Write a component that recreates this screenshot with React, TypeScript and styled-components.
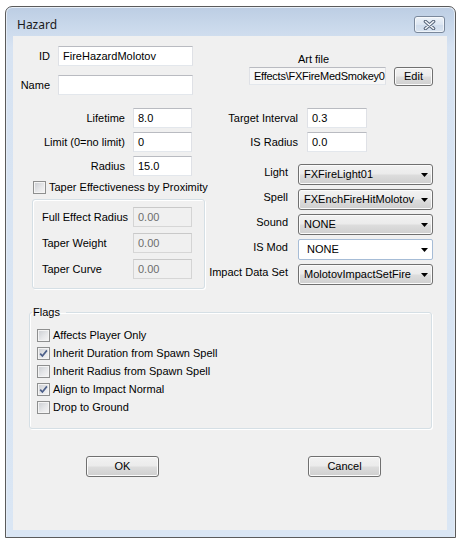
import React from "react";
import styled, { createGlobalStyle } from "styled-components";

const Global = createGlobalStyle`
  html, body { margin: 0; padding: 0; background: #ffffff; }
  body { font-family: "Liberation Sans", Arial, sans-serif; font-size: 11px; color: #000000; }
  * { box-sizing: border-box; }
`;

const Window = styled.div`
  margin: 6px 0 0 5px;
  width: 451px;
  height: 532px;
  border: 1px solid #5b5b5b;
  border-radius: 7px 7px 0 0;
  background: linear-gradient(to bottom, #bccde3 0px, #cbdaec 22px, #d7e3f2 40px, #dae6f4 100%);
  box-shadow: inset 0 1px 0 #e9f0f8, inset 1px 0 0 #e4ecf6, inset -1px 0 0 #e4ecf6;
  display: flex;
  flex-direction: column;
  padding: 0 8px 7px 7px;
`;

const TitleBar = styled.div`
  height: 29px;
  flex: none;
  display: flex;
  align-items: flex-start;
  justify-content: space-between;
  padding: 9px 2px 0 4px;
`;

const Title = styled.span`
  font-family: "Noto Sans", "Open Sans", sans-serif;
  font-size: 12px;
  line-height: 17px;
  color: #1b1b1b;
`;

const CloseButton = styled.div`
  width: 31px;
  height: 17px;
  border: 1px solid #7a889b;
  border-radius: 3px;
  background: linear-gradient(to bottom, #eef3f9 0%, #dce6f2 50%, #cfdcec 51%, #d9e4f1 100%);
  box-shadow: inset 0 0 0 1px rgba(255, 255, 255, 0.6);
  display: flex;
  align-items: center;
  justify-content: center;
`;

const Client = styled.div`
  flex: 1;
  background: #f0f0f0;
  display: flex;
  flex-direction: column;
  padding-top: 10px;
`;

const RowA = styled.div`
  display: flex;
  align-items: flex-start;
`;

const IdGrid = styled.div`
  display: grid;
  grid-template-columns: 37px 135px;
  column-gap: 8px;
  row-gap: 9px;
  align-items: center;
`;

const ArtBlock = styled.div`
  margin: 6px 0 0 56px;
  display: grid;
  grid-template-columns: 137px 39px;
  column-gap: 8px;
  row-gap: 1px;
  align-items: start;
`;

const ArtLabel = styled.div`
  grid-column: 1;
  text-align: center;
  padding-right: 8px;
  line-height: 14px;
`;

const RowB = styled.div`
  margin-top: 13px;
  display: flex;
  align-items: flex-start;
`;

const LeftCol = styled.div`
  width: 196px;
  flex: none;
  display: flex;
  flex-direction: column;
`;

const RightCol = styled.div`
  flex: 1;
  display: flex;
  flex-direction: column;
`;

const Stack = styled.div<{ $gap: number; $top?: number }>`
  display: flex;
  flex-direction: column;
  gap: ${(p) => p.$gap}px;
  margin-top: ${(p) => p.$top ?? 0}px;
`;

const FieldRow = styled.div<{ $gap: number }>`
  display: flex;
  align-items: center;
  gap: ${(p) => p.$gap}px;
`;

const Label = styled.span<{ $w?: number; $align?: "left" | "right"; $lift?: number }>`
  width: ${(p) => (p.$w ? `${p.$w}px` : "auto")};
  flex: none;
  text-align: ${(p) => p.$align ?? "right"};
  white-space: nowrap;
  line-height: 13px;
  padding-bottom: ${(p) => p.$lift ?? 0}px;
`;

type BoxState = "normal" | "disabled" | "readonly";

const TextBox = styled.div<{ $w: number; $h?: number; $state?: BoxState; $tight?: boolean }>`
  width: ${(p) => p.$w}px;
  height: ${(p) => p.$h ?? 20}px;
  flex: none;
  display: flex;
  align-items: center;
  padding-left: 4px;
  border: 1px solid;
  border-color: ${(p) =>
    p.$state === "disabled"
      ? "#c9c9c9 #d4d4d4 #d6d6d6 #d4d4d4"
      : "#b9bbc1 #dfe1e6 #e3e7ec #dfe1e6"};
  background: ${(p) =>
    p.$state === "disabled" ? "#f0f0f0" : p.$state === "readonly" ? "#f7f7f7" : "#ffffff"};
  color: ${(p) => (p.$state === "disabled" ? "#6d6d6d" : "#000000")};
  white-space: nowrap;
  overflow: hidden;
  line-height: 13px;
  letter-spacing: ${(p) => (p.$tight ? "-0.25px" : "normal")};
`;

const PushButton = styled.div<{ $w: number; $h?: number }>`
  width: ${(p) => p.$w}px;
  height: ${(p) => p.$h ?? 21}px;
  flex: none;
  border: 1px solid #707070;
  border-radius: 3px;
  background: linear-gradient(to bottom, #f2f2f2 0%, #ebebeb 48%, #dddddd 52%, #cfcfcf 100%);
  box-shadow: inset 0 0 0 1px #fbfbfb;
  display: flex;
  align-items: center;
  justify-content: center;
  line-height: 13px;
`;

const Combo = styled.div<{ $editable?: boolean }>`
  width: 135px;
  height: 21px;
  flex: none;
  display: flex;
  align-items: center;
  justify-content: space-between;
  padding: 0 4px 0 ${(p) => (p.$editable ? 8 : 5)}px;
  border: 1px solid ${(p) => (p.$editable ? "#a6bcd6" : "#707070")};
  border-radius: ${(p) => (p.$editable ? 2 : 3)}px;
  background: ${(p) =>
    p.$editable
      ? "#ffffff"
      : "linear-gradient(to bottom, #f2f2f2 0%, #ebebeb 48%, #dddddd 52%, #cfcfcf 100%)"};
  box-shadow: ${(p) => (p.$editable ? "none" : "inset 0 0 0 1px #fbfbfb")};
  white-space: nowrap;
  line-height: 13px;
`;

const CheckRow = styled.div<{ $left?: number; $top?: number }>`
  display: flex;
  align-items: center;
  height: 13px;
  margin-left: ${(p) => p.$left ?? 0}px;
  margin-top: ${(p) => p.$top ?? 0}px;
  gap: 3px;
  white-space: nowrap;
  line-height: 13px;
`;

const CheckBoxFrame = styled.span`
  width: 13px;
  height: 13px;
  flex: none;
  border: 1px solid #8e8f8f;
  background: linear-gradient(135deg, #c9ccd1 0%, #e6e7e9 55%, #f6f6f6 100%);
  box-shadow: inset 0 0 0 1px #f4f4f4;
  display: flex;
  align-items: center;
  justify-content: center;
`;

const GroupBox = styled.div`
  margin: 5px 0 0 19px;
  width: 173px;
  height: 90px;
  border: 1px solid #d5dfe5;
  border-radius: 3px;
  box-shadow: inset 1px 1px 0 #ffffff, 1px 1px 0 #ffffff;
  padding: 7px 0 0 9px;
  display: flex;
  flex-direction: column;
  gap: 6px;
`;

const FlagsSet = styled.fieldset`
  margin: 17px 0 0 16px;
  width: 403px;
  min-width: 0;
  border: 1px solid #d5dfe5;
  border-radius: 3px;
  box-shadow: inset 1px 1px 0 #ffffff, 1px 1px 0 #ffffff;
  padding: 10px 0 14px 2px;
`;

const Legend = styled.legend`
  padding: 0 6px 0 1px;
  line-height: 13px;
  font-size: 11px;
`;

const FlagList = styled.div`
  display: flex;
  flex-direction: column;
  gap: 5px;
  padding-left: 5px;
`;

const ButtonRow = styled.div`
  margin-top: 27px;
  display: flex;
  padding-left: 73px;
  gap: 149px;
`;

const Arrow = () => (
  <svg width="7" height="4" viewBox="0 0 7 4">
    <polygon points="0,0 7,0 3.5,4" fill="#000000" />
  </svg>
);

const CheckMark = () => (
  <svg width="9" height="9" viewBox="0 0 9 9">
    <path d="M1.2 4.6 L3.4 7 L7.9 1.4" stroke="#4c5f89" strokeWidth="1.7" fill="none" />
  </svg>
);

const CloseGlyph = () => (
  <svg width="13" height="10" viewBox="0 0 13 10">
    <path d="M2.5 1.5 L10.5 8.5 M10.5 1.5 L2.5 8.5" stroke="#56657a" strokeWidth="3.6" strokeLinecap="round" />
    <path d="M2.5 1.5 L10.5 8.5 M10.5 1.5 L2.5 8.5" stroke="#f3f6fa" strokeWidth="1.6" strokeLinecap="round" />
  </svg>
);

const CheckBox: React.FC<{ checked?: boolean; label: string; left?: number; top?: number }> = ({
  checked,
  label,
  left,
  top,
}) => (
  <CheckRow $left={left} $top={top}>
    <CheckBoxFrame>{checked ? <CheckMark /> : null}</CheckBoxFrame>
    <span>{label}</span>
  </CheckRow>
);

const leftFields = [
  { label: "Lifetime", value: "8.0" },
  { label: "Limit (0=no limit)", value: "0" },
  { label: "Radius", value: "15.0" },
];

const taperFields = [
  { label: "Full Effect Radius", value: "0.00" },
  { label: "Taper Weight", value: "0.00" },
  { label: "Taper Curve", value: "0.00" },
];

const rightFields = [
  { label: "Target Interval", value: "0.3" },
  { label: "IS Radius", value: "0.0" },
];

const combos = [
  { label: "Light", value: "FXFireLight01" },
  { label: "Spell", value: "FXEnchFireHitMolotov" },
  { label: "Sound", value: "NONE" },
  { label: "IS Mod", value: "NONE", editable: true },
  { label: "Impact Data Set", value: "MolotovImpactSetFire" },
];

const flags = [
  { label: "Affects Player Only", checked: false },
  { label: "Inherit Duration from Spawn Spell", checked: true },
  { label: "Inherit Radius from Spawn Spell", checked: false },
  { label: "Align to Impact Normal", checked: true },
  { label: "Drop to Ground", checked: false },
];

export default function App() {
  return (
    <>
      <Global />
      <Window>
        <TitleBar>
          <Title>Hazard</Title>
          <CloseButton>
            <CloseGlyph />
          </CloseButton>
        </TitleBar>
        <Client>
          <RowA>
            <IdGrid>
              <Label>ID</Label>
              <TextBox $w={135}>FireHazardMolotov</TextBox>
              <Label>Name</Label>
              <TextBox $w={135} />
            </IdGrid>
            <ArtBlock>
              <ArtLabel>Art file</ArtLabel>
              <span />
              <TextBox $w={137} $h={18} $state="readonly" $tight>
                Effects\FXFireMedSmokey0
              </TextBox>
              <PushButton $w={39} $h={19}>
                Edit
              </PushButton>
            </ArtBlock>
          </RowA>

          <RowB>
            <LeftCol>
              <Stack $gap={4}>
                {leftFields.map((f) => (
                  <FieldRow key={f.label} $gap={8}>
                    <Label $w={112}>{f.label}</Label>
                    <TextBox $w={59}>{f.value}</TextBox>
                  </FieldRow>
                ))}
              </Stack>
              <CheckBox label="Taper Effectiveness by Proximity" left={20} top={5} />
              <GroupBox>
                {taperFields.map((f) => (
                  <FieldRow key={f.label} $gap={0}>
                    <Label $w={91} $align="left">
                      {f.label}
                    </Label>
                    <TextBox $w={59} $state="disabled">
                      {f.value}
                    </TextBox>
                  </FieldRow>
                ))}
              </GroupBox>
            </LeftCol>

            <RightCol>
              <Stack $gap={4}>
                {rightFields.map((f) => (
                  <FieldRow key={f.label} $gap={9}>
                    <Label $w={89}>{f.label}</Label>
                    <TextBox $w={60}>{f.value}</TextBox>
                  </FieldRow>
                ))}
              </Stack>
              <Stack $gap={4} $top={12}>
                {combos.map((c) => (
                  <FieldRow key={c.label} $gap={10}>
                    <Label $w={79} $lift={4}>
                      {c.label}
                    </Label>
                    <Combo $editable={c.editable}>
                      <span>{c.value}</span>
                      <Arrow />
                    </Combo>
                  </FieldRow>
                ))}
              </Stack>
            </RightCol>
          </RowB>

          <FlagsSet>
            <Legend>Flags</Legend>
            <FlagList>
              {flags.map((f) => (
                <CheckBox key={f.label} label={f.label} checked={f.checked} />
              ))}
            </FlagList>
          </FlagsSet>

          <ButtonRow>
            <PushButton $w={73}>OK</PushButton>
            <PushButton $w={73}>Cancel</PushButton>
          </ButtonRow>
        </Client>
      </Window>
    </>
  );
}
